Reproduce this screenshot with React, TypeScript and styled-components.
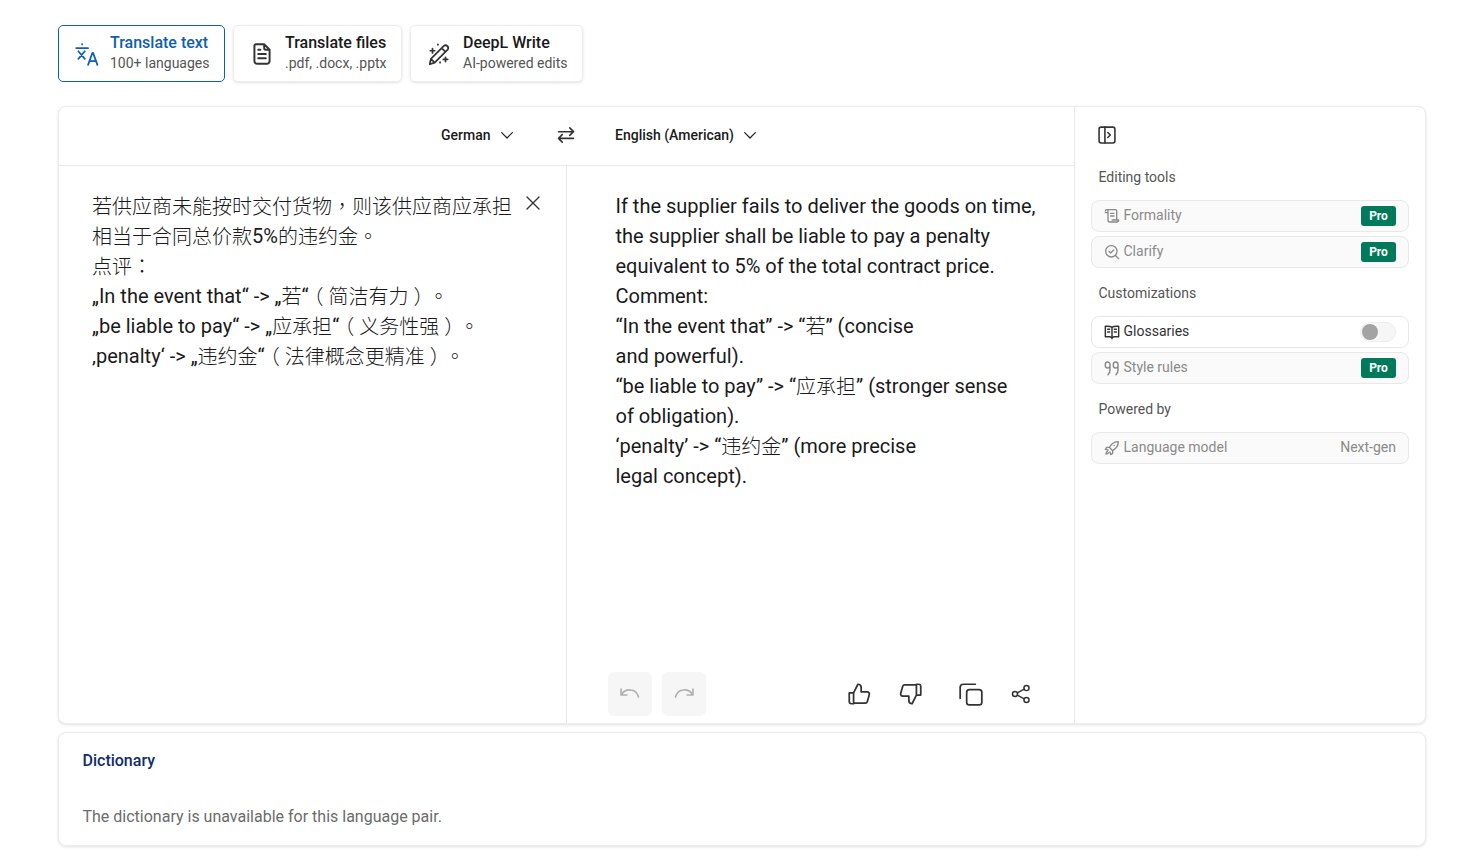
import React from 'react';
import styled, { createGlobalStyle } from 'styled-components';

const GlobalStyle = createGlobalStyle`
  html, body {
    margin: 0;
    padding: 0;
    background: #fff;
    font-family: Roboto, "Noto Sans CJK TC", sans-serif;
  }
`;

const Page = styled.div`
  width: 1475px;
  height: 867px;
  box-sizing: border-box;
  padding: 25px 49px 0 58px;
  overflow: hidden;
`;

const Tabs = styled.div`
  display: flex;
  gap: 8px;
  margin-bottom: 24px;
`;

const Tab = styled.div<{ $active?: boolean; $width: number; $gap: number }>`
  width: ${p => p.$width}px;
  height: 57px;
  box-sizing: border-box;
  display: flex;
  align-items: center;
  border-radius: 5px;
  border: 1px solid ${p => (p.$active ? '#0f5fb0' : '#ededed')};
  box-shadow: ${p => (p.$active ? 'none' : '0 1px 3px rgba(0,0,0,.12)')};
  padding-left: 15px;
  gap: ${p => p.$gap}px;
  svg { flex: none; }
`;

const TabText = styled.div`
  display: flex;
  flex-direction: column;
  gap: 3px;
  padding-bottom: 2px;
`;

const TabTitle = styled.div<{ $active?: boolean }>`
  font-size: 16px;
  line-height: 19px;
  font-weight: 500;
  color: ${p => (p.$active ? '#0f5fb0' : '#1a1a1a')};
`;

const TabSub = styled.div`
  font-size: 14px;
  line-height: 17px;
  color: #555;
`;

const Card = styled.div`
  border-radius: 8px;
  border: 1px solid #ececec;
  box-shadow: 0 1px 3px rgba(0,0,0,.12);
  background: #fff;
`;

const Main = styled(Card)`
  height: 618px;
  box-sizing: border-box;
  display: flex;
  margin-bottom: 8px;
`;

const Translator = styled.div`
  width: 1015px;
  flex: none;
  display: flex;
  flex-direction: column;
  border-right: 1px solid #e8e8e8;
`;

const LangBar = styled.div`
  height: 59px;
  flex: none;
  box-sizing: border-box;
  border-bottom: 1px solid #e8e8e8;
  padding: 0 0 2px 382px;
  display: flex;
  align-items: center;
  font-size: 14px;
  font-weight: 500;
  color: #1a1a1a;
`;

const Lang = styled.div<{ $gap: number; $width: number; $left?: number }>`
  width: ${p => p.$width}px;
  margin-left: ${p => p.$left ?? 0}px;
  display: flex;
  align-items: center;
  gap: ${p => p.$gap}px;
`;

const Panes = styled.div`
  flex: 1;
  display: flex;
  min-height: 0;
`;

const SourcePane = styled.div`
  width: 508px;
  box-sizing: border-box;
  border-right: 1px solid #e8e8e8;
  padding: 25px 0 0 33px;
  position: relative;
`;

const TargetPane = styled.div`
  flex: 1;
  box-sizing: border-box;
  padding: 25px 0 0 48.5px;
  display: flex;
  flex-direction: column;
  justify-content: space-between;
`;

const TextBlock = styled.div`
  font-size: 20px;
  line-height: 30px;
  color: #1a1a1a;
  white-space: nowrap;
  text-spacing-trim: space-all;
`;

const Han = styled.span`
  font-weight: 300;
  line-height: 1;
  vertical-align: -1px;
`;

// full-width brackets sit centred in their em box in the reference
const Bracket = styled.span`
  display: inline-block;
  width: 1em;
  text-align: center;
  font-feature-settings: "halt";
`;

const ClearButton = styled.div`
  position: absolute;
  left: 465px;
  top: 28px;
  display: flex;
`;

const Actions = styled.div`
  height: 44px;
  margin-bottom: 7px;
  display: flex;
  align-items: center;
`;

const HistoryButton = styled.div<{ $right: number; $left: number }>`
  width: 44px;
  height: 44px;
  border-radius: 6px;
  background: #f6f6f6;
  display: flex;
  align-items: center;
  justify-content: center;
  margin-left: ${p => p.$left}px;
  margin-right: ${p => p.$right}px;
`;

const ActionIcon = styled.div<{ $left: number }>`
  margin-left: ${p => p.$left}px;
  display: flex;
`;

const Sidebar = styled.div`
  flex: 1;
  box-sizing: border-box;
  padding: 0 16px;
`;

const SidebarToggle = styled.div`
  height: 55px;
  display: flex;
  align-items: center;
  padding-left: 6px;
`;

const SectionLabel = styled.div<{ $top: number }>`
  font-size: 14px;
  line-height: 20px;
  color: #555;
  padding-left: 7.5px;
  margin-top: ${p => p.$top}px;
  margin-bottom: 13px;
`;

const Row = styled.div<{ $enabled?: boolean }>`
  height: 32px;
  box-sizing: border-box;
  border: 1px solid #e8e8e8;
  border-radius: 8px;
  background: ${p => (p.$enabled ? '#fff' : '#fafafa')};
  color: ${p => (p.$enabled ? '#333' : '#8a8a8a')};
  display: flex;
  align-items: center;
  padding: 0 12px;
  font-size: 14px;
  margin-bottom: 4px;
  svg { flex: none; margin-right: 3.5px; }
`;

const RowName = styled.span`
  flex: 1;
  padding-bottom: 2px;
`;

const RowValue = styled.span`
  padding-bottom: 2px;
`;

const Pro = styled.span`
  background: #007a5a;
  color: #fff;
  font-size: 12px;
  font-weight: 700;
  line-height: 20px;
  width: 35px;
  text-align: center;
  border-radius: 3px;
`;

const Toggle = styled.div`
  width: 36px;
  height: 20px;
  box-sizing: border-box;
  border-radius: 10px;
  background: #f6f6f6;
  border: 1px solid #eee;
  padding: 1px;
  display: flex;
  align-items: center;
`;

const Knob = styled.div`
  width: 16px;
  height: 16px;
  border-radius: 50%;
  background: #a3a3a3;
`;

const Dictionary = styled(Card)`
  height: 114px;
  box-sizing: border-box;
  padding: 18px 24px 0 23.5px;
`;

const DictionaryTitle = styled.div`
  font-size: 16px;
  line-height: 20px;
  font-weight: 500;
  color: #0f2b6e;
  margin-bottom: 36px;
`;

const DictionaryText = styled.div`
  font-size: 16px;
  line-height: 20px;
  color: #6b6b6b;
`;

type IconProps = { size?: number; color?: string; width?: number; children: React.ReactNode };

const Icon = ({ size = 24, color = '#333', width = 1.6, children }: IconProps) => (
  <svg width={size} height={size} viewBox="0 0 24 24" fill="none" stroke={color} strokeWidth={width} strokeLinecap="round" strokeLinejoin="round">
    {children}
  </svg>
);

const Chevron = () => (
  <Icon size={16} width={1.8} color="#222"><path d="M4 8.500l8 8 8-8" /></Icon>
);

const App = (): JSX.Element => (
  <Page>
    <GlobalStyle />
    <Tabs>
      <Tab $active $width={167} $gap={10}>
        <Icon size={26} color="#0f5fb0">
          <path d="M2 6.500h11M7.500 2.800v.4M4 9.500l6 7M10 9.500l-6 7M13 22l4-11h.6l4 11M14.500 18.500h6" />
        </Icon>
        <TabText>
          <TabTitle $active>Translate text</TabTitle>
          <TabSub>100+ languages</TabSub>
        </TabText>
      </Tab>
      <Tab $width={169} $gap={10}>
        <Icon size={26} color="#333" width={1.8}>
          <path d="M6.500 3H14l5 5v10.500a2.500 2.500 0 0 1-2.500 2.500h-9A2.500 2.500 0 0 1 5 18.500V4.500A1.500 1.500 0 0 1 6.500 3zM14 3v3.500A1.500 1.500 0 0 0 15.500 8H19M8.500 12h7M8.500 16h7M8.500 8h2" />
        </Icon>
        <TabText>
          <TabTitle>Translate files</TabTitle>
          <TabSub>.pdf, .docx, .pptx</TabSub>
        </TabText>
      </Tab>
      <Tab $width={173} $gap={11}>
        <Icon size={26} color="#333">
          <path d="M3.500 21.500l1-5L16.500 4.500a2.500 2.500 0 0 1 3.500 3.500L8 20zM14.500 6.500l3.500 3.500M4.500 16.500L8 20M6 7v4M4 9h4M18 15v4M16 17h4M11 3v.5M13 19.500v.5" />
        </Icon>
        <TabText>
          <TabTitle>DeepL Write</TabTitle>
          <TabSub>AI-powered edits</TabSub>
        </TabText>
      </Tab>
    </Tabs>

    <Main>
      <Translator>
        <LangBar>
          <Lang $gap={8} $width={115}>German <Chevron /></Lang>
          <Icon size={20} color="#333" width={1.9}><path d="M3 8h18M16.500 3.500L21 8l-4.500 4.500M21 16H3M7.500 11.500L3 16l4.500 4.500" /></Icon>
          <Lang $gap={8} $width={160} $left={39}>English (American) <Chevron /></Lang>
        </LangBar>
        <Panes>
          <SourcePane>
            <TextBlock>
              <Han>若供应商未能按时交付货物，则该供应商应承担</Han><br />
              <Han>相当于合同总价款</Han>5%<Han>的违约金。</Han><br />
              <Han>点评：</Han><br />
              „In the event that“ -&gt; „<Han>若</Han>“<Han><Bracket>（</Bracket>简洁有力<Bracket>）</Bracket>。</Han><br />
              „be liable to pay“ -&gt; „<Han>应承担</Han>“<Han><Bracket>（</Bracket>义务性强<Bracket>）</Bracket>。</Han><br />
              ‚penalty‘ -&gt; „<Han>违约金</Han>“<Han><Bracket>（</Bracket>法律概念更精准<Bracket>）</Bracket>。</Han>
            </TextBlock>
            <ClearButton>
              <Icon size={18} color="#333" width={1.8}><path d="M4 4l16 16M20 4L4 20" /></Icon>
            </ClearButton>
          </SourcePane>
          <TargetPane>
            <TextBlock>
              If the supplier fails to deliver the goods on time,<br />
              the supplier shall be liable to pay a penalty<br />
              equivalent to 5% of the total contract price.<br />
              Comment:<br />
              “In the event that” -&gt; “<Han>若</Han>” (concise<br />
              and powerful).<br />
              “be liable to pay” -&gt; “<Han>应承担</Han>” (stronger sense<br />
              of obligation).<br />
              ‘penalty’ -&gt; “<Han>违约金</Han>” (more precise<br />
              legal concept).
            </TextBlock>
            <Actions>
              <HistoryButton $left={-8} $right={10}>
                <Icon color="#b0b0b0"><path d="M3 7v6h6M3.500 12.500C6 8.500 10 7.500 13 8c3.500.5 6.500 3 7.500 7" /></Icon>
              </HistoryButton>
              <HistoryButton $left={0} $right={18}>
                <Icon color="#b0b0b0"><path d="M21 7v6h-6M20.500 12.500C18 8.500 14 7.500 11 8c-3.500.5-6.500 3-7.500 7" /></Icon>
              </HistoryButton>
              <ActionIcon $left={122}>
                <Icon size={26}><path d="M3 11h4v10H5a2 2 0 0 1-2-2zM7 11l4-8c1.800 0 3 1.200 3 3v4h5.500a2 2 0 0 1 2 2.500l-1.800 6.500a2 2 0 0 1-2 1.500H7" /></Icon>
              </ActionIcon>
              <ActionIcon $left={26}>
                <Icon size={26}><path d="M21 13h-4V3h2a2 2 0 0 1 2 2zM17 13l-4 8c-1.800 0-3-1.200-3-3v-4H4.500a2 2 0 0 1-2-2.500l1.800-6.500a2 2 0 0 1 2-1.500H17" /></Icon>
              </ActionIcon>
              <ActionIcon $left={34}>
                <Icon size={26}><rect x="8" y="8" width="14" height="14" rx="2.500" /><path d="M16 3H5a3 3 0 0 0-3 3v10" /></Icon>
              </ActionIcon>
              <ActionIcon $left={26}>
                <Icon size={22}><circle cx="18" cy="5.500" r="2.800" /><circle cx="5.500" cy="12" r="2.800" /><circle cx="18" cy="18.500" r="2.800" /><path d="M8 10.700l7.500-4M8 13.300l7.500 4" /></Icon>
              </ActionIcon>
            </Actions>
          </TargetPane>
        </Panes>
      </Translator>
      <Sidebar>
        <SidebarToggle>
          <Icon size={20} color="#333" width={1.9}><rect x="2.500" y="2.500" width="19" height="19" rx="2.500" /><path d="M9.500 2.500v19M13 9l3 3-3 3" /></Icon>
        </SidebarToggle>
        <SectionLabel $top={5}>Editing tools</SectionLabel>
        <Row>
          <Icon size={16} color="#8a8a8a" width={2}><path d="M2 4.500a2 2 0 0 1 4 0V7H2M4 2.500h13a2 2 0 0 1 2 2V17M6 4.500V18a3 3 0 0 0 3 3h10a3 3 0 0 0 3-3h-10M10 8h5M10 12h5" /></Icon>
          <RowName>Formality</RowName><Pro>Pro</Pro>
        </Row>
        <Row>
          <Icon size={16} color="#8a8a8a" width={2}><circle cx="11" cy="11" r="8.500" /><path d="M17.500 17.500L22 22M7.500 11l2.500 2.500 4.500-4.500" /></Icon>
          <RowName>Clarify</RowName><Pro>Pro</Pro>
        </Row>
        <SectionLabel $top={15}>Customizations</SectionLabel>
        <Row $enabled>
          <Icon size={16} color="#333" width={2.2}><path d="M12 5v17M12 5c-2-1.500-6-2-10-1.500V19h7l3 2 3-2h7V3.500C18 3 14 3.500 12 5zM5.500 8h3M5.500 12h3M15.500 8h3M15.500 12h3" /></Icon>
          <RowName>Glossaries</RowName><Toggle><Knob /></Toggle>
        </Row>
        <Row>
          <Icon size={16} color="#8a8a8a" width={2.2}><path d="M2 6.500a3.500 3.500 0 0 1 7 0v8c0 3-1 5.500-3 7.500M2 6.500v2a3.500 3.500 0 0 0 7 0M14 6.500a3.500 3.500 0 0 1 7 0v8c0 3-1 5.500-3 7.500M14 6.500v2a3.500 3.500 0 0 0 7 0" /></Icon>
          <RowName>Style rules</RowName><Pro>Pro</Pro>
        </Row>
        <SectionLabel $top={15}>Powered by</SectionLabel>
        <Row>
          <Icon size={16} color="#8a8a8a" width={2}><path d="M21.500 2.500c-6 0-10 3-13.500 8.500l5 5c5.500-3.500 8.500-7.500 8.500-13.500zM8 11H4l-2 3 4 1M13 16v4l-3 2-1-4M5 17c-2 1-2 3-2 4 1 0 3 0 4-2M15 8h.5" /></Icon>
          <RowName>Language model</RowName><RowValue>Next-gen</RowValue>
        </Row>
      </Sidebar>
    </Main>

    <Dictionary>
      <DictionaryTitle>Dictionary</DictionaryTitle>
      <DictionaryText>The dictionary is unavailable for this language pair.</DictionaryText>
    </Dictionary>
  </Page>
);

export default App;
